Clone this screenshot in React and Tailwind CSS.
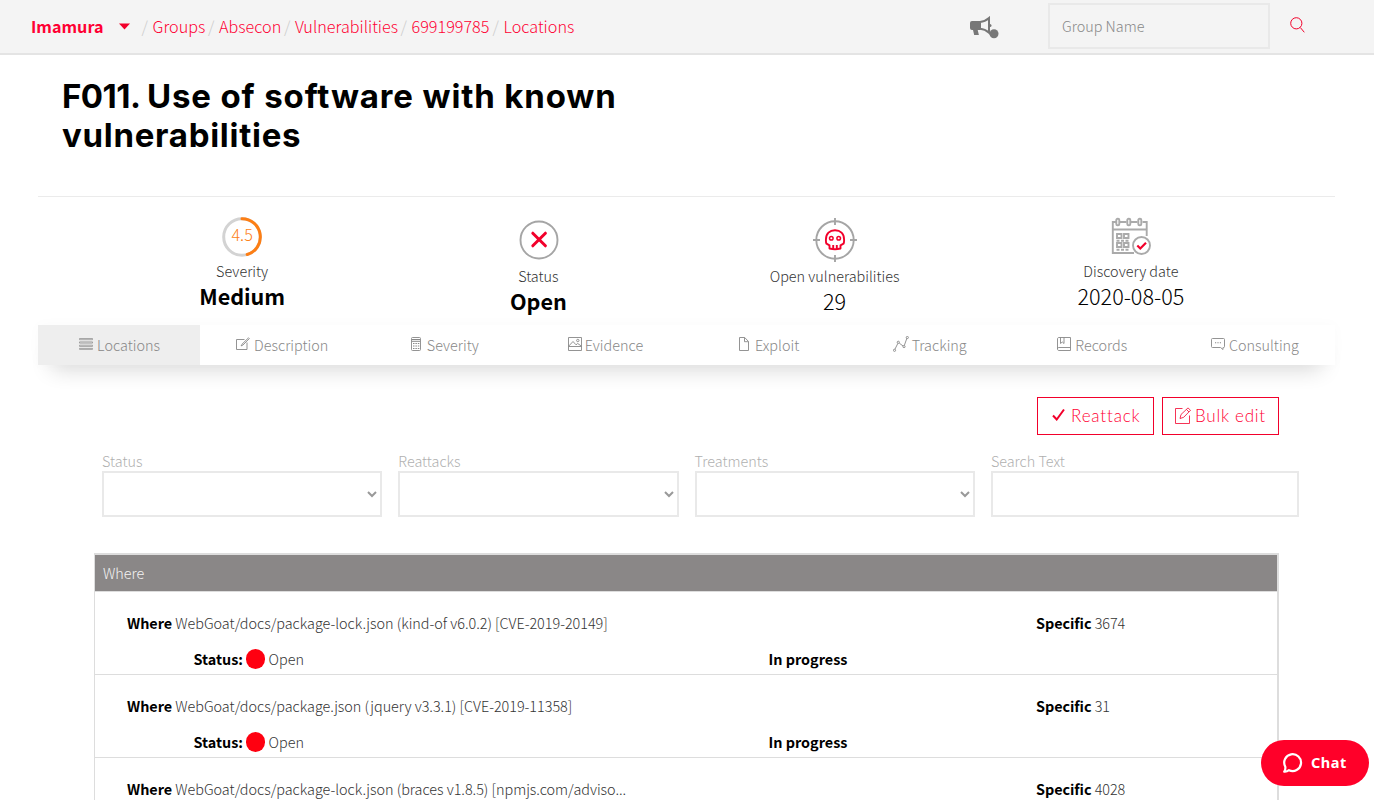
const S = { fill: "none", stroke: "currentColor" };

const ListIcon = () => (
  <svg width="14" height="12" viewBox="0 0 14 12" {...S}>
    <path d="M.5.5h13v1.2H.5zM.5 3.9h13v1.2H.5zM.5 7.2h13v1.2H.5zM.5 10.4h13v1H.5z" strokeWidth=".7" />
  </svg>
);
const NoteIcon = () => (
  <svg width="14" height="13" viewBox="0 0 14 13" {...S}>
    <path d="M8.5 2.5h-8v10h10.5v-7M12.5.8 6 7.2l-.9 1.7 1.8-.8L13.3 1.6z" strokeWidth=".9" />
  </svg>
);
const CalcIcon = () => (
  <svg width="10" height="14" viewBox="0 0 10 14" {...S}>
    <rect x=".5" y=".5" width="9" height="13" rx="1" strokeWidth=".9" />
    <path d="M1 2.5h8M1 4.3h8" strokeWidth="1" />
    <path d="M2 6.5h6.500M2 9h6.500M2 11.500h6.500" strokeWidth="1.2" strokeDasharray="1.500 .9" />
  </svg>
);
const PhotoIcon = () => (
  <svg width="14" height="14" viewBox="0 0 14 14" {...S} strokeWidth=".9">
    <path d="M.5.5h13v13H.5zM.5 9.500h13M.8 9 5 4.500l3 3.300 1.700-1.300L13.300 9" />
    <circle cx="9.800" cy="3.500" r="1.200" />
  </svg>
);
const FileIcon = () => (
  <svg width="10" height="14" viewBox="0 0 10 14" {...S} strokeWidth=".9">
    <path d="M.5.5h5.200L9.500 4.500v9h-9zM5.500.700v4h3.800" />
  </svg>
);
const GraphIcon = () => (
  <svg width="16" height="16" viewBox="0 0 16 16" {...S} strokeWidth=".9">
    <path d="m1.900 13.300 3-6M6.300 7.200l3.800 2.800M11.300 9.500l2.600-7.300" />
    <circle cx="1.500" cy="14.300" r="1.100" />
    <circle cx="5.300" cy="6.300" r="1.100" />
    <circle cx="11" cy="10.600" r="1.100" />
    <circle cx="14.300" cy="1.500" r="1.100" />
  </svg>
);
const BookIcon = () => (
  <svg width="14" height="14" viewBox="0 0 14 14" {...S} strokeWidth=".9">
    <path d="M13.500.5H2C1 .5.500 1 .5 2v10c0 1 .5 1.500 1.500 1.500h11.500zM.5 12c0-1 .5-1.500 1.500-1.500h11.500M3.500.5v6L5.300 5l1.700 1.500v-6" />
  </svg>
);
const CommentIcon = () => (
  <svg width="14" height="12" viewBox="0 0 14 12" {...S} strokeWidth=".9">
    <path d="M1.500.5h11q1 0 1 1v7q0 1-1 1h-.5v2l-2.500-2h-8q-1 0-1-1v-7q0-1 1-1z" />
    <path d="M4 4.800h6" strokeWidth="1.100" strokeDasharray="1.200 1.200" />
  </svg>
);

const SeverityRing = () => (
  <div className="relative h-10 w-10">
    <svg className="block" width="40" height="40" viewBox="0 0 40 40" fill="none" strokeWidth="3">
      <circle cx="20" cy="20" r="18.300" stroke="#d3d3d3" />
      <path d="M20 1.700a18.300 18.300 0 0 1 5.200 35.850" stroke="#fd7e14" strokeLinecap="round" />
    </svg>
    <span className="absolute inset-0 -top-px text-center text-[16.200px] leading-[37px] text-[#fd7e14]">4.5</span>
  </div>
);
const StatusIcon = () => (
  <svg className="ml-px block" width="40" height="40" viewBox="0 0 40 40" fill="none">
    <circle cx="20" cy="20" r="18.500" stroke="#a5a5a5" strokeWidth="1.900" />
    <path d="m13.800 13.200 12.600 12.600M26.400 13.200 13.800 25.800" stroke="#f2002b" strokeWidth="3" strokeLinecap="round" />
  </svg>
);
const SkullIcon = () => (
  <svg className="block" width="46" height="46" viewBox="0 0 46 46" fill="none">
    <circle cx="23" cy="23" r="18.700" stroke="#a5a5a5" strokeWidth="1.900" />
    <path d="M23 1v7M23 38v7M1 23h7M38 23h7" stroke="#a5a5a5" strokeWidth="1.900" />
    <path d="M17.500 31.500v-3.200l-3-1.600c-.7-1.200-.6-2.100-.6-4 0-6 3.800-9.500 9.100-9.500s9.100 3.500 9.100 9.500c0 1.900.1 2.800-.6 4l-3 1.600v3.200q-5.500 1.400-11 0zM21.200 28v4M24.800 28v4" stroke="#f2002b" strokeWidth="1.900" strokeLinejoin="round" />
    <circle cx="19.300" cy="21.300" r="1.800" stroke="#f2002b" strokeWidth="1.500" />
    <circle cx="26.700" cy="21.300" r="1.800" stroke="#f2002b" strokeWidth="1.500" />
  </svg>
);
const CalendarIcon = () => (
  <svg className="block" width="40" height="40" viewBox="0 0 40 40" fill="none" stroke="#aaa" strokeWidth="1.900">
    <path d="M5 5H1.800v31H23M8.500 5h7M20 5h6.500M31.500 5h4.200v14M1.800 12.500h34" />
    <rect x="5.300" y="1.800" width="3" height="6.500" rx="1.300" />
    <rect x="16.300" y="1.800" width="3" height="6.500" rx="1.300" />
    <rect x="27.300" y="1.800" width="3" height="6.500" rx="1.300" />
    <path d="M6 17h4.500v4H6zM13 17h4.500v4H13zM6 26h4.500v4H6zM13 26h4.500v4H13z" />
    <path d="M5.500 23.700h13M5.500 32.700h13" strokeDasharray="3 1.500" />
    <circle cx="30.500" cy="28.500" r="8.500" fill="#fff" />
    <path d="m26.300 28.500 3 3 5.700-5.700" stroke="#f2002b" strokeWidth="2.200" />
  </svg>
);

const crumbs = [
  ["Groups", "w-[55.500px]"],
  ["Absecon", "w-[65px]"],
  ["Vulnerabilities", "w-[105.500px]"],
  ["699199785", "w-[81px]"],
  ["Locations", "w-[72px]"],
];

const stats = [
  { icon: <SeverityRing />, pad: "pt-5", label: "Severity", value: "Medium", cls: "font-bold tracking-[-0.05px]" },
  { icon: <StatusIcon />, pad: "pt-[22.500px]", gap: "pt-[2px]", label: "Status", value: "Open", cls: "font-bold tracking-[-0.050px]" },
  { icon: <SkullIcon />, pad: "pt-5", gap: "-mt-[1.500px]", label: "Open vulnerabilities", value: "29", cls: "font-light" },
  { icon: <CalendarIcon />, pad: "pt-5", label: "Discovery date", value: "2020-08-05", cls: "font-light" },
];

const tabs = [
  ["Locations", <ListIcon />, "gap-[4px] pl-px"],
  ["Description", <NoteIcon />, "gap-[4px] pl-[2px]"],
  ["Severity", <CalcIcon />, "gap-[6px] pl-[3px]"],
  ["Evidence", <PhotoIcon />, "gap-[3px]"],
  ["Exploit", <FileIcon />, "gap-[6px] pl-[3px]"],
  ["Tracking", <GraphIcon />, "gap-[3px]"],
  ["Records", <BookIcon />, "gap-[4px] pl-px"],
  ["Consulting", <CommentIcon />, "gap-[4px] pl-[2px]"],
];

const rows = [
  { where: "WebGoat/docs/package-lock.json (kind-of v6.0.2) [CVE-2019-20149]", specific: "3674", status: "Open" },
  { where: "WebGoat/docs/package.json (jquery v3.3.1) [CVE-2019-11358]", specific: "31", status: "Open" },
  { where: "WebGoat/docs/package-lock.json (braces v1.8.5) [npmjs.com/adviso...", specific: "4028" },
];

function Header() {
  return (
    <header className="flex h-[55px] items-center border-b-2 border-[#e4e4e4] bg-[#f4f4f4] pl-[31px] text-[16.200px] text-[#ff0033]">
      <span className="w-[88px] font-bold">Imamura</span>
      <svg width="11" height="7" viewBox="0 0 11 7"><path d="M0 .5h11L5.500 6.500z" fill="#f2002b" /></svg>
      <nav className="flex pl-[11.500px]">
        {crumbs.map(([name, w]) => (
          <span key={name} className="flex">
            <span className="w-[11px] text-[#ccc]">/</span>
            <span className={`${w} whitespace-nowrap`}>{name}</span>
          </span>
        ))}
      </nav>
      <div className="ml-auto flex items-center">
        <svg className="mt-[2px]" width="29" height="23" viewBox="0 0 29 23" fill="#777">
          <path d="M2 5h8.500v9H7.700l1.200 5H4.200L3 14H2q-2 0-2-2V7q0-2 2-2z" />
          <path d="M10 6q5-.3 9-3.900v14.600q-4-3.500-9-3.900z" fill="none" stroke="#777" strokeWidth="2" />
          <circle cx="20" cy="9.500" r="1.500" />
          <circle cx="24" cy="17.800" r="4.500" />
        </svg>
        <div className="mb-[2px] ml-[49px] flex h-[46px] w-[222px] items-center border-2 border-[#e9e9e9] pl-3 text-[14.400px] text-[#888]">Group Name</div>
        <svg className="-mt-[3px] mr-[69px] ml-[20px]" width="15" height="16" viewBox="0 0 15 16" fill="none" stroke="#f2002b">
          <circle cx="6.300" cy="6.300" r="5.600" />
          <path d="m10.300 10.500 4 4.800" />
        </svg>
      </div>
    </header>
  );
}

function Select({ label }) {
  return (
    <div className="w-[296.300px] shrink-0 px-2">
      <div className="h-[20px] leading-5 text-[#b0b0b0]">{label}</div>
      <div className="flex h-[46px] items-center justify-end border-2 border-[#e9e9e9] pr-[3px]">
        <svg width="10" height="7" viewBox="0 0 10 7" fill="none" stroke="#999" strokeWidth="2"><path d="m1 1 4 4 4-4" /></svg>
      </div>
    </div>
  );
}

export default function App() {
  return (
    <div className="relative h-[800px] w-full overflow-hidden bg-white font-['Noto_Sans_CJK_SC',sans-serif] text-[14.400px] font-light text-[#333]">
      <Header />
      <main className="mr-[39px] ml-[38px]">
        <div className="h-[142px] border-b border-[#ebebeb] pt-[22px] pl-6">
          <h1 className="w-[600px] font-['Inter',sans-serif] text-[33px] leading-[39px] font-bold tracking-[0.720px] text-black">
            <span className="tracking-[-0.500px]">F011. </span>
            <span className="tracking-[0.860px]">Use of software with known</span>
            <br />vulnerabilities
          </h1>
        </div>

        <section className="mx-14 grid h-[128px] grid-cols-4">
          {stats.map((s) => (
            <div key={s.label} className={`flex flex-col items-center ${s.pad}`}>
              {s.icon}
              <div className={`leading-[28px] ${s.gap ?? ""}`}>{s.label}</div>
              <div className={`-mt-px text-[21.600px] leading-[24px] text-black ${s.cls}`}>{s.value}</div>
            </div>
          ))}
        </section>

        <div className="grid h-10 grid-cols-8 shadow-[0_16px_22px_-14px_rgba(0,0,0,0.24),0_0_14px_rgba(0,0,0,0.025)]">
          {tabs.map(([name, icon, gap], i) => (
            <div key={name} className={`flex items-center justify-center text-[#888] ${gap} ${i === 0 ? "bg-[#eee]" : "bg-white"}`}>
              <span className="-mt-[3px]">{icon}</span>
              <span>{name}</span>
            </div>
          ))}
        </div>

        <section className="mx-14 pt-8">
          <div className="flex justify-end gap-2 font-['Lato',sans-serif] text-[17px] font-light text-[#ff0033]">
            <button className="flex h-[38px] w-[117px] items-center border border-[#f2002b] pl-[14px]">
              <svg className="-mt-[3px]" width="13" height="13" viewBox="0 0 13 13" fill="none" stroke="#f2002b" strokeWidth="2"><path d="m1 7.500 3.700 4L12 1.500" /></svg>
              <span className="pl-[6px] tracking-[0.850px]">Reattack</span>
            </button>
            <button className="flex h-[38px] w-[117px] items-center border border-[#f2002b] pl-3">
              <svg className="-mt-[2px]" width="17" height="17" viewBox="0 0 17 17" fill="none" stroke="#f2002b">
                <path d="M7.500 1.500h-7v15h14v-8M5 11.500l1-4L13 .9l2.500 2.400-6.800 7zM11.500 2.500 14 5" strokeWidth=".8" />
              </svg>
              <span className="pl-[3px] tracking-[0.750px]">Bulk edit</span>
            </button>
          </div>

          <div className="mt-4 flex">
            <Select label="Status" />
            <Select label="Reattacks" />
            <Select label="Treatments" />
            <div className="ml-2 w-[308px] shrink-0">
              <div className="h-[20px] leading-5 text-[#b0b0b0]">Search Text</div>
              <div className="h-[46px] border-2 border-[#e9e9e9]" />
            </div>
          </div>

          <div className="mt-9 border-t-2 border-r-2 border-l border-[#ddd]">
            <div className="flex h-[37px] items-center border-b border-[#ddd] bg-[#8a8787] pl-2 text-[#f4f4f4]">Where</div>
            {rows.map(({ where, specific, status }) => (
              <div key={where} className="h-[83px] border-b border-[#ddd] pt-[13px] leading-9">
                <div className="flex pl-8">
                  <div className="w-[909px] tracking-[-0.025px]"><b className="font-bold text-black">Where</b> {where}</div>
                  <div className="tracking-[-0.050px]"><b className="font-bold text-black">Specific</b> {specific}</div>
                </div>
                {status && (
                  <div className="flex items-center pl-[98.500px]">
                    <div className="flex w-[575px] items-center">
                      <b className="w-[52.500px] font-bold text-black">Status:</b>
                      <span className="-mt-px mr-[3.500px] h-5 w-[19px] rounded-full bg-[#ff0010]" />
                      {status}
                    </div>
                    <b className="font-bold text-black">In progress</b>
                  </div>
                )}
              </div>
            ))}
          </div>
        </section>
      </main>

      <button className="absolute top-[740px] left-[1261px] flex h-[46px] w-[108px] items-center rounded-full bg-[#ff0029] pl-[22px] font-['Noto_Sans',sans-serif] text-[14.500px] font-bold tracking-[0.500px] text-white">
        <svg width="20" height="20" viewBox="0 0 20 20" fill="none" stroke="#fff" strokeWidth="2.200" strokeLinejoin="round">
          <path d="M2.300 13.700A8.400 8.400 0 1 1 6 17.200Q3.700 19 1.200 18.700 2.700 16.700 2.300 13.700z" />
        </svg>
        <span className="pl-2">Chat</span>
      </button>
    </div>
  );
}
